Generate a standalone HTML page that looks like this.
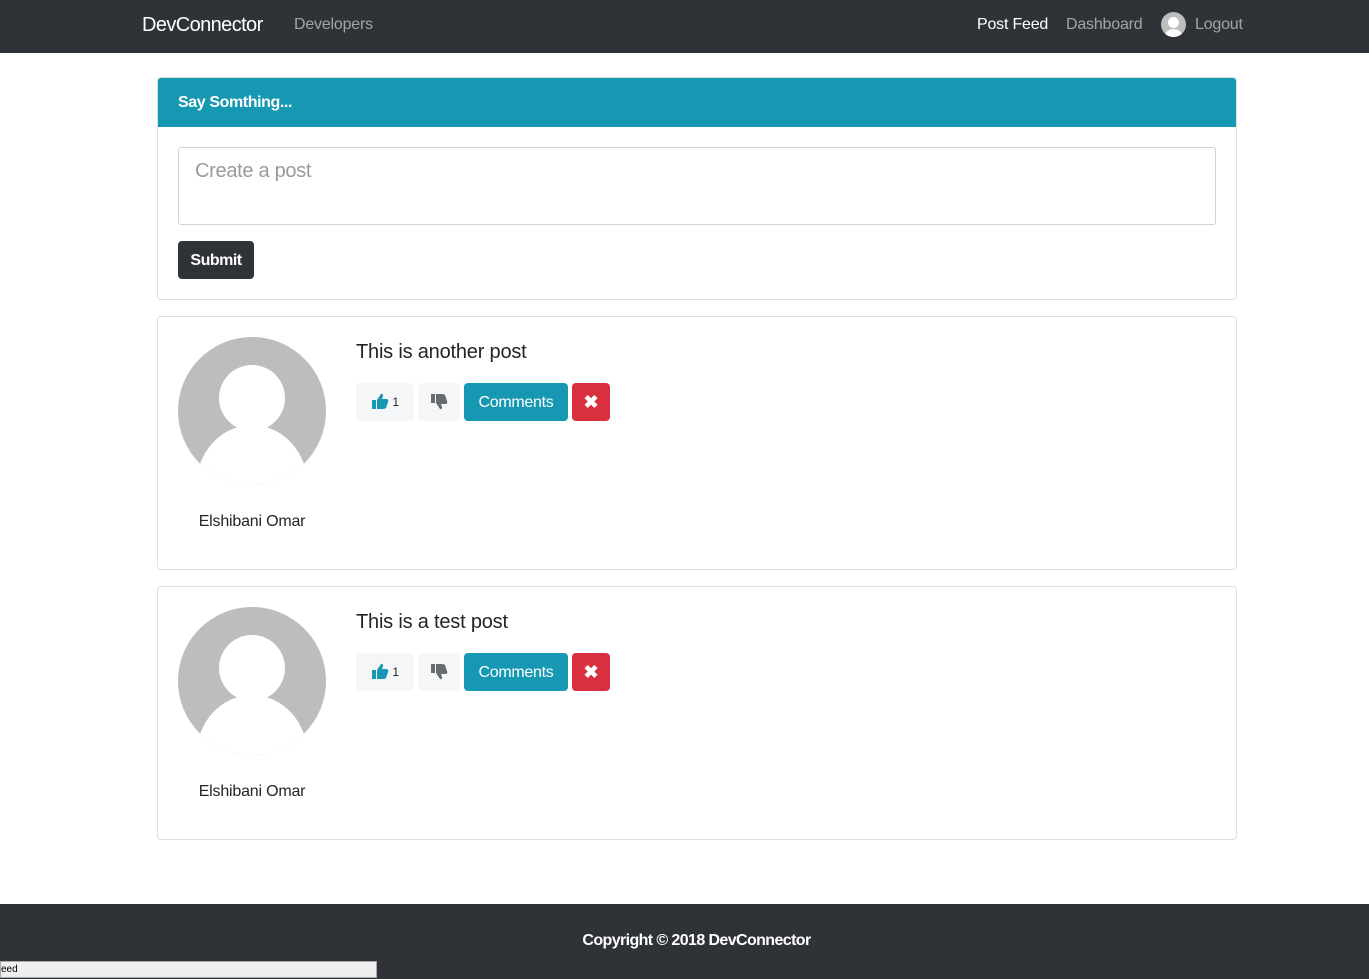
<!DOCTYPE html>
<html><head><meta charset="utf-8"><style>
*{box-sizing:border-box}
body{margin:0;width:1369px;height:979px;background:#fff;font-family:"Liberation Sans",Arial,sans-serif;position:relative;overflow:hidden;color:#212529}
.nav{position:absolute;left:0;top:0;width:1369px;height:53px;background:#2f3337}
.nav span{position:absolute;top:16px;font-size:16px;color:rgba(255,255,255,.55);letter-spacing:-0.2px}
.card{position:absolute;left:157px;width:1080px;border:1px solid #dfdfdf;border-radius:4px;background:#fff}
.hdr{background:#1798b2;color:#fff;font-weight:bold;font-size:16px;height:49px;line-height:49px;padding-left:20px;border-radius:3px 3px 0 0;letter-spacing:-0.4px}
.btn{position:absolute;height:38px;border-radius:4px;font-size:16px;line-height:39px;text-align:center}
.light{background:#f5f6f8}
.info{background:#1798b2;color:#fff;letter-spacing:-0.3px}
.danger{background:#d9303f;color:#fff;font-weight:bold;font-size:18px}
.name{position:absolute;left:-1px;width:190px;text-align:center;font-size:16px;letter-spacing:-0.2px}
.title{position:absolute;left:198px;font-size:20px;letter-spacing:-0.2px}
</style></head><body>
<div class="nav">
<span style="left:142px;top:14px;font-size:20px;color:#fff;letter-spacing:-0.6px">DevConnector</span>
<span style="left:294px">Developers</span>
<span style="left:977px;color:#fff">Post Feed</span>
<span style="left:1066px">Dashboard</span>
<svg style="position:absolute;left:1161px;top:12px" width="25" height="25" viewBox="0 0 25 25"><defs><clipPath id="c0"><circle cx="12.5" cy="12.5" r="12.5"/></clipPath></defs><circle cx="12.5" cy="12.5" r="12.5" fill="#bdbdbd"/><g clip-path="url(#c0)" fill="#fff"><circle cx="12.5" cy="10.5" r="5.5"/><ellipse cx="12.5" cy="25" rx="9" ry="8"/></g></svg>
<span style="left:1195px">Logout</span>
</div>

<div class="card" style="top:77px;height:223px">
<div class="hdr">Say Somthing...</div>
<div style="position:absolute;left:20px;top:69px;width:1038px;height:78px;border:1px solid #ced4da;border-radius:3px;padding:12px 16px;font-size:20px;color:#9a9a9a;letter-spacing:-0.3px">Create a post</div>
<div style="position:absolute;left:20px;top:163px;width:76px;height:38px;background:#2f3337;color:#fff;border-radius:4px;font-weight:bold;font-size:16px;line-height:39px;text-align:center;letter-spacing:-0.5px">Submit</div>
</div>

<div class="card" style="top:316px;height:254px">
<svg style="position:absolute;left:20px;top:20px" width="148" height="148" viewBox="0 0 148 148"><defs><clipPath id="c1"><circle cx="74" cy="74" r="74"/></clipPath></defs><circle cx="74" cy="74" r="74" fill="#bdbdbd"/><g clip-path="url(#c1)" fill="#fff"><circle cx="74" cy="61" r="33"/><ellipse cx="74" cy="150" rx="56" ry="62"/></g></svg>
<div class="name" style="top:196px">Elshibani Omar</div>
<div class="title" style="top:24px">This is another post</div>
<div class="btn light" style="left:198px;top:66px;width:58px;font-size:12px"><svg width="18" height="16" viewBox="0 0 18 16" style="vertical-align:-3px"><rect x="1" y="7" width="4" height="9" fill="#1798b2"/><path d="M6 7 L10 1 Q12 0 12 3 L11 6 H16 Q18 7 17 9 L15 15 Q14 16 12 16 H6Z" fill="#1798b2"/></svg> 1</div>
<div class="btn light" style="left:260px;top:66px;width:42px"><svg width="18" height="16" viewBox="0 0 18 16" style="vertical-align:-3px;transform:scaleY(-1)"><rect x="1" y="7" width="4" height="9" fill="#666c72"/><path d="M6 7 L10 1 Q12 0 12 3 L11 6 H16 Q18 7 17 9 L15 15 Q14 16 12 16 H6Z" fill="#666c72"/></svg></div>
<div class="btn info" style="left:306px;top:66px;width:104px">Comments</div>
<div class="btn danger" style="left:414px;top:66px;width:38px">✖</div>
</div>

<div class="card" style="top:586px;height:254px">
<svg style="position:absolute;left:20px;top:20px" width="148" height="148" viewBox="0 0 148 148"><defs><clipPath id="c2"><circle cx="74" cy="74" r="74"/></clipPath></defs><circle cx="74" cy="74" r="74" fill="#bdbdbd"/><g clip-path="url(#c2)" fill="#fff"><circle cx="74" cy="61" r="33"/><ellipse cx="74" cy="150" rx="56" ry="62"/></g></svg>
<div class="name" style="top:196px">Elshibani Omar</div>
<div class="title" style="top:24px">This is a test post</div>
<div class="btn light" style="left:198px;top:66px;width:58px;font-size:12px"><svg width="18" height="16" viewBox="0 0 18 16" style="vertical-align:-3px"><rect x="1" y="7" width="4" height="9" fill="#1798b2"/><path d="M6 7 L10 1 Q12 0 12 3 L11 6 H16 Q18 7 17 9 L15 15 Q14 16 12 16 H6Z" fill="#1798b2"/></svg> 1</div>
<div class="btn light" style="left:260px;top:66px;width:42px"><svg width="18" height="16" viewBox="0 0 18 16" style="vertical-align:-3px;transform:scaleY(-1)"><rect x="1" y="7" width="4" height="9" fill="#666c72"/><path d="M6 7 L10 1 Q12 0 12 3 L11 6 H16 Q18 7 17 9 L15 15 Q14 16 12 16 H6Z" fill="#666c72"/></svg></div>
<div class="btn info" style="left:306px;top:66px;width:104px">Comments</div>
<div class="btn danger" style="left:414px;top:66px;width:38px">✖</div>
</div>

<div style="position:absolute;left:0;top:904px;width:1369px;height:75px;background:#2f3337;color:#fff;text-align:center;font-weight:bold;font-size:16px;padding-top:28px;letter-spacing:-0.6px;padding-left:24px">Copyright © 2018 DevConnector</div>
<div style="position:absolute;left:0;top:961px;width:377px;height:17px;background:#efefef;border:1px solid #aaa;font-size:10px;line-height:15px;color:#000">eed</div>
</body></html>
